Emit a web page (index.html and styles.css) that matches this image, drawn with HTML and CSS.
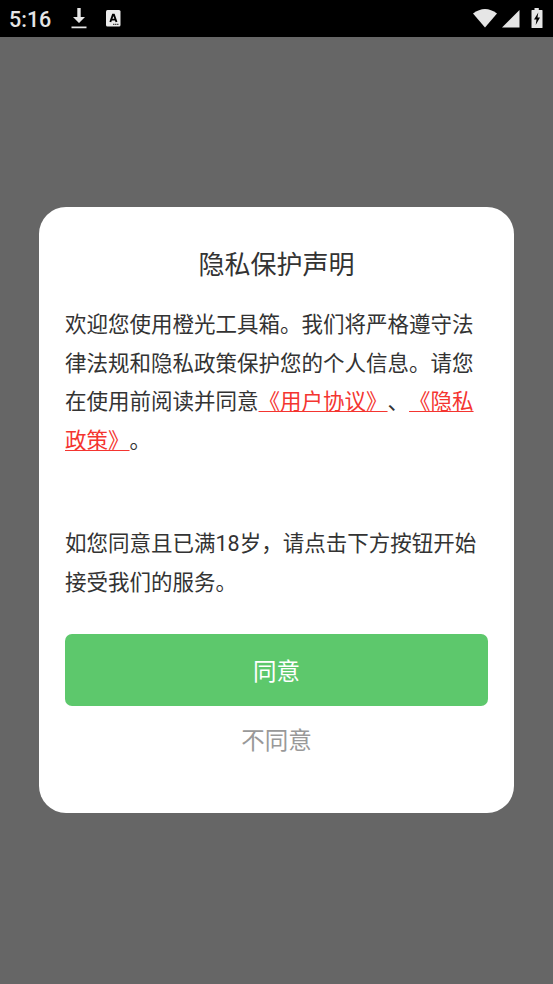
FILE: index.html
```html
<!DOCTYPE html>
<html lang="zh-CN">
<head>
<meta charset="utf-8">
<title>隐私保护声明</title>
<link rel="stylesheet" href="styles.css">
</head>
<body>
<header class="status">
  <span class="time">5:16</span>
  <svg class="download" width="16" height="21" viewBox="0 0 16 21"><path d="M6.300 0h3.400v9H14L8 15 2 9h4.300zM.5 18.500h15v1.800H.5z" fill="#e6e6e6"/></svg>
  <svg class="app" width="15" height="17" viewBox="0 0 15 17"><rect width="14.500" height="16.500" rx="1.500" fill="#ececec"/><path d="M4.300 12 6.900 4.800h1L10.500 12M5.500 9.600h3.900" fill="none" stroke="#000" stroke-width="1.900"/><path d="M7 14.300h6" stroke="#222" stroke-dasharray="1.500 .5"/></svg>
  <div class="system">
    <svg width="24" height="19" viewBox="0 0 24 19"><path d="M0 4.500Q12-4.500 24 4.500L12 18.500z" fill="#e6e6e6"/></svg>
    <svg width="18" height="18" viewBox="0 0 18 18"><path d="M17.500 0v17.500H0z" fill="#e6e6e6"/></svg>
    <svg class="battery" width="12" height="21" viewBox="0 0 12 21"><path d="M3.500 0h4.300v2H11q.5 0 .5.500v17q0 .5-.5.500H1q-.5 0-.5-.5v-17Q.5 2 1 2h2.500z" fill="#e6e6e6"/><path d="M7.300 4.500 3 11.500h2.500L4.700 17 9 9.500H6.500z" fill="#000"/></svg>
  </div>
</header>
<main class="backdrop">
  <section class="dialog">
    <h1>隐私保护声明</h1>
    <p>欢迎您使用橙光工具箱。我们将严格遵守法<br>律法规和隐私政策保护您的个人信息。请您<br>在使用前阅读并同意<a>《用户协议》</a>、<a>《隐私<br>政策》</a>。</p>
    <p class="confirm">如您同意且已满18岁，请点击下方按钮开始<br>接受我们的服务。</p>
    <button class="agree">同意</button>
    <button class="decline">不同意</button>
  </section>
</main>
</body>
</html>
```
FILE: styles.css
```css
* { box-sizing: border-box; }
body { margin: 0; height: 984px; background: #666; font-family: Roboto, "Noto Sans CJK SC", sans-serif; text-spacing-trim: space-all; overflow: hidden; }
.status { height: 37px; background: #000; display: flex; align-items: center; padding: 0 10px 0 9px; color: #e6e6e6; }
.time { font-size: 21.500px; font-weight: 500; line-height: 37px; width: 62px; padding-top: 2px; }
.app { margin-left: 19px; }
.system { margin-left: auto; display: flex; gap: 5px; align-items: center; }
.battery { margin-left: 6px; }
.backdrop { height: 947px; padding: 170px 39px 0; }
.dialog { height: 606px; padding: 39px 26px 0; border-radius: 27px; background: #fff; }
h1 { margin: 0; font-size: 26px; font-weight: 400; line-height: 38px; text-align: center; color: #333; }
p { margin: 22px 0 0; font-size: 21.500px; line-height: 38.600px; color: #333; white-space: nowrap; }
a { color: #f43530; text-decoration: underline; text-decoration-thickness: 1px; text-underline-offset: 2px; }
.confirm { margin-top: 65px; }
button { display: block; width: 100%; border: 0; padding: 0; font-family: inherit; font-size: 23.500px; font-weight: 400; }
.agree { height: 72.500px; margin-top: 31px; border-radius: 7px; background: #5dc86c; color: #fff; }
.decline { height: 65px; background: transparent; color: #999; }
```
